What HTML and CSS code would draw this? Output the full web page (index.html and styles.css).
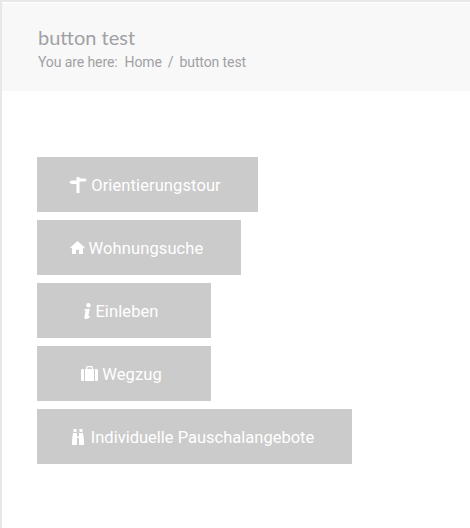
FILE: index.html
```html
<!DOCTYPE html>
<html lang="en">
<head>
    <meta charset="UTF-8">
    <meta name="viewport" content="width=device-width, initial-scale=1.0">
    <title>button test</title>
    <link rel="stylesheet" href="styles.css">
</head>
<body>
    <div class="page">
        <div class="title-bar">
            <h1>button test</h1>
            <div class="crumbs">
                <span class="crumbs-label">You are here:</span>
                <a href="#">Home</a>
                <span class="crumbs-sep">/</span>
                <span>button test</span>
            </div>
        </div>

        <div class="buttons">
            <a class="btn btn-tour" href="#">
                <svg class="icon" width="18" height="16" viewBox="0 0 18 16"><path d="M7.500 0h3v1.500h5.500l2 1.500-2 1.500h-5.500V16h-3V7H2.500L0 5.300l2.500-1.700h5z"/></svg>
                <span>Orientierungstour</span>
            </a>
            <a class="btn btn-home" href="#">
                <svg class="icon" width="15" height="13" viewBox="0 0 15 13"><path d="M7.500 0L15 6.700l-.8.9-1.200-1V13H9V8.700H6V13H2V6.600L.8 7.600 0 6.700z"/></svg>
                <span>Wohnungsuche</span>
            </a>
            <a class="btn btn-small" href="#">
                <svg class="icon" width="7" height="16" viewBox="0 0 7 16"><circle cx="4.400" cy="2.200" r="2.200"/><path d="M.8 6h5l-1.500 7H6l-.4 1.500Q3.500 16 1.500 16 0 16 .4 14l1.200-6.300H.5z"/></svg>
                <span>Einleben</span>
            </a>
            <a class="btn btn-small" href="#">
                <svg class="icon" width="17" height="15" viewBox="0 0 17 15"><path d="M5 3V1.500Q5 0 6.500 0h4Q12 0 12 1.500V3h-1.300V1.300H6.300V3zM0 4.500Q0 3 1.500 3H3v12H1.500Q0 15 0 13.500zM4 3h9v12H4zM14 3h1.500Q17 3 17 4.500v9q0 1.500-1.500 1.500H14z"/></svg>
                <span>Wegzug</span>
            </a>
            <a class="btn btn-wide" href="#">
                <svg class="icon" width="12" height="16" viewBox="0 0 12 16"><path d="M1.500 0h3v3h-3zM7.500 0h3v3h-3zM1 4h4v3.500h2V4h4l1 7v5H7V9H5v7H0v-5z"/></svg>
                <span>Individuelle Pauschalangebote</span>
            </a>
        </div>
    </div>
</body>
</html>
```

FILE: styles.css
```css
html, body {
    margin: 0;
    padding: 0;
}
body {
    background: #fff;
    font-family: Roboto, "Liberation Sans", sans-serif;
}
.page {
    min-height: 526px;
    border-top: 2px solid #e8e8e8;
    border-left: 2px solid #e8e8e8;
}
.title-bar {
    height: 88px;
    margin-top: 1px;
    padding: 22px 0 0 36px;
    box-sizing: border-box;
    background: #f8f8f8;
    color: #a0a0a4;
}
.title-bar h1 {
    margin: 0;
    font-family: Lato, sans-serif;
    font-size: 20px;
    font-weight: 400;
    line-height: 24px;
}
.crumbs {
    display: flex;
    margin-top: 4px;
    font-size: 14px;
    line-height: 18px;
    letter-spacing: -0.1px;
}
.crumbs a {
    color: inherit;
    text-decoration: none;
}
.crumbs-label {
    margin-right: 7px;
}
.crumbs-sep {
    margin: 0 6px;
}
.buttons {
    display: flex;
    flex-direction: column;
    align-items: flex-start;
    gap: 8px;
    padding: 66px 0 0 35px;
}
.btn {
    display: flex;
    align-items: center;
    justify-content: center;
    gap: 4px;
    height: 55px;
    padding-right: 5px;
    box-sizing: border-box;
    background: #cbcbcb;
    color: #fff;
    font-size: 16.5px;
    font-weight: 400;
    letter-spacing: 0.1px;
    text-decoration: none;
}
.btn span {
    padding-top: 2px;
}
.icon {
    fill: #fff;
    flex: none;
}
.btn-tour {
    width: 221px;
}
.btn-home {
    width: 204px;
}
.btn-small {
    width: 174px;
}
.btn-wide {
    width: 315px;
    gap: 7px;
    padding-right: 3px;
    letter-spacing: 0;
}
```
